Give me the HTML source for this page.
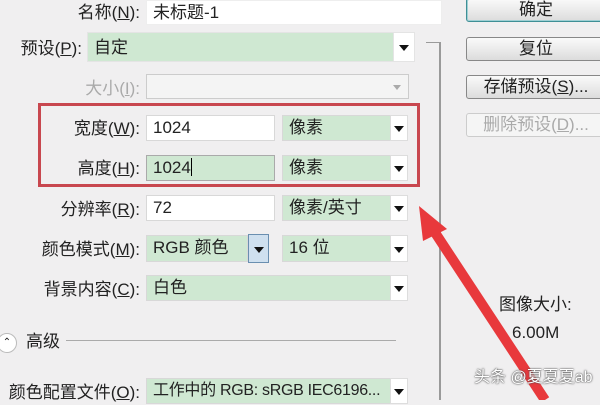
<!DOCTYPE html>
<html><head><meta charset="utf-8"><style>
body{margin:0;width:600px;height:400px;overflow:hidden;background:#f0eff0;font-family:"Liberation Sans","Noto Sans CJK SC",sans-serif;font-size:17px;color:#222;position:relative}
.a{position:absolute}
.lbl{position:absolute;text-align:right;width:140px;left:0;line-height:24px}
.f{position:absolute;box-sizing:border-box;border:1px solid #d8d8d8;line-height:24px;padding-left:6px;white-space:nowrap;overflow:hidden}
.w{background:#fff}
.g{background:#cfe8d2}
.dd{position:absolute;background:#fff;border:1px solid #ddd;box-sizing:border-box}
.dd:after{content:"";position:absolute;left:50%;top:50%;margin:-2px 0 0 -5px;border:5px solid transparent;border-top:6px solid #111;border-bottom:0}
.btn{position:absolute;left:466px;width:140px;height:24px;box-sizing:border-box;border:1px solid #888;border-radius:3px;background:linear-gradient(#fafafa,#dcdcdc);text-align:center;line-height:22px;font-size:17px}
u{text-decoration:underline}
</style></head><body>
<div class="lbl" style="top:1px">名称(<u>N</u>):</div>
<div class="f w" style="left:146px;top:0;width:296px;height:25px;border-color:#eee">未标题-1</div>

<div class="lbl" style="top:37px;width:82px">预设(<u>P</u>):</div>
<div class="f g" style="left:87px;top:32px;width:307px;height:30px;line-height:30px;border-color:#e4e4e4">自定</div>
<div class="dd" style="left:393px;top:32px;width:22px;height:30px;border-color:#e4e4e4"></div>

<div class="a" style="left:439px;top:42px;width:2px;height:358px;background:#9a9a9a"></div>
<div class="a" style="left:426px;top:42px;width:14px;height:1px;background:#9a9a9a"></div>

<div class="lbl" style="top:77px;color:#aaa">大小(<u>I</u>):</div>
<div class="f" style="left:146px;top:74px;width:263px;height:25px;background:#f4f4f4;border-color:#ccc"></div>
<div class="a" style="left:393px;top:85px;border:4px solid transparent;border-top:5px solid #aaa"></div>

<div class="lbl" style="top:117px">宽度(<u>W</u>):</div>
<div class="f w" style="left:146px;top:115px;width:129px;height:26px">1024</div>
<div class="f g" style="left:282px;top:115px;width:110px;height:26px">像素</div>
<div class="dd" style="left:390px;top:115px;width:18px;height:26px"></div>

<div class="lbl" style="top:157px">高度(<u>H</u>):</div>
<div class="f g" style="left:146px;top:155px;width:129px;height:26px;border-color:#aaa">1024<span style="display:inline-block;width:1px;height:18px;background:#000;vertical-align:-3px"></span></div>
<div class="f g" style="left:282px;top:155px;width:110px;height:26px">像素</div>
<div class="dd" style="left:390px;top:155px;width:18px;height:26px"></div>

<div class="a" style="left:38px;top:103px;width:382px;height:84px;box-sizing:border-box;border:3px solid #c8474f"></div>

<div class="lbl" style="top:198px">分辨率(<u>R</u>):</div>
<div class="f w" style="left:146px;top:195px;width:129px;height:26px">72</div>
<div class="f g" style="left:282px;top:195px;width:110px;height:26px">像素/英寸</div>
<div class="dd" style="left:390px;top:195px;width:18px;height:26px"></div>

<div class="lbl" style="top:238px">颜色模式(<u>M</u>):</div>
<div class="f g" style="left:146px;top:235px;width:102px;height:27px">RGB 颜色</div>
<div class="dd" style="left:248px;top:234px;width:21px;height:29px;background:#cfe0ef;border-color:#6a8fb0"></div>
<div class="f g" style="left:282px;top:235px;width:110px;height:27px">16 位</div>
<div class="dd" style="left:390px;top:235px;width:18px;height:27px"></div>

<div class="lbl" style="top:278px">背景内容(<u>C</u>):</div>
<div class="f g" style="left:146px;top:275px;width:246px;height:26px">白色</div>
<div class="dd" style="left:390px;top:275px;width:18px;height:26px"></div>

<div class="a" style="left:-3px;top:333px;width:18px;height:18px;border-radius:50%;background:#fff;border:1px solid #bbb;font-size:10px;line-height:18px;text-align:center">&#8963;</div>
<div class="a" style="left:26px;top:330px;line-height:24px">高级</div>
<div class="a" style="left:66px;top:340px;width:330px;height:1px;background:#aaa"></div>

<div class="lbl" style="top:381px">颜色配置文件(<u>O</u>):</div>
<div class="f g" style="left:146px;top:378px;width:246px;height:26px;font-size:16px;letter-spacing:-0.3px">工作中的 RGB: sRGB IEC6196...</div>
<div class="dd" style="left:390px;top:378px;width:18px;height:26px"></div>

<div class="btn" style="top:-2px;border-color:#3f8f96;box-shadow:inset 0 0 0 1px #9fd0d4">确定</div>
<div class="btn" style="top:37px">复位</div>
<div class="btn" style="top:75px">存储预设(<u>S</u>)...</div>
<div class="btn" style="top:113px;color:#aaa;border-color:#ccc;background:#f5f5f5">删除预设(<u>D</u>)...</div>

<div class="a" style="left:499px;top:294px;line-height:22px">图像大小:</div>
<div class="a" style="left:512px;top:322px;line-height:22px">6.00M</div>

<svg class="a" style="left:0;top:0" width="600" height="400">
<line x1="545" y1="400" x2="432" y2="228" stroke="#e8393c" stroke-width="10"/>
<polygon points="419,206 447,229 423,241" fill="#e8393c"/>
</svg>
<div class="a" style="left:474px;top:367px;color:#fff;font-size:16px;line-height:22px;text-shadow:0 0 2px #555,0 0 1px #333">头条 @夏夏夏ab</div>
</body></html>
